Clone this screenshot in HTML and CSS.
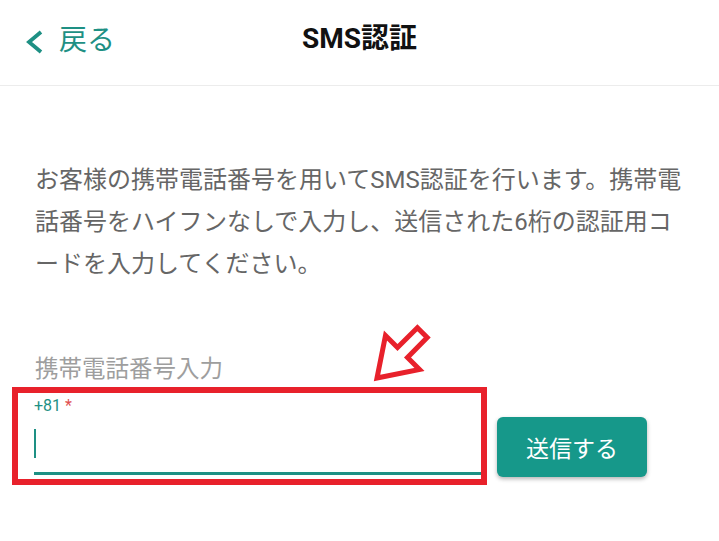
FILE: index.html
```html
<!DOCTYPE html>
<html lang="ja">
<head>
<meta charset="utf-8">
<title>SMS認証</title>
<link rel="stylesheet" href="styles.css">
</head>
<body>
<div class="page">
  <header class="header">
    <a class="back" href="#">
      <svg class="chev" width="20" height="24" viewBox="0 0 20 24"><polyline points="16,2 4,12 16,22" fill="none" stroke="#1e9084" stroke-width="3.8" stroke-linejoin="miter"/></svg>
      <span>戻る</span>
    </a>
    <h1 class="title">SMS認証</h1>
    <div></div>
  </header>
  <main class="content">
    <p class="desc">お客様の携帯電話番号を用いてSMS認証を行います。携帯電話番号をハイフンなしで入力し、送信された6桁の認証用コードを入力してください。</p>
    <div class="label">携帯電話番号入力</div>
    <div class="form-row">
      <div class="field">
        <div class="field-label">+81 <span class="req">*</span></div>
        <div class="field-input"><span class="cursor"></span></div>
        <div class="highlight"></div>
      </div>
      <button class="send">送信する</button>
    </div>
  </main>
  <svg class="arrow" width="90" height="80" viewBox="0 0 90 80"><polygon points="17,68 25.5,25.5 37.5,37.5 57.4,17.8 67.2,27.6 47.5,47.5 59.5,59.5" fill="#fff" stroke="#e8212b" stroke-width="5" stroke-linejoin="miter"/></svg>
</div>
</body>
</html>
```
FILE: styles.css
```css
* { box-sizing: border-box; }
html, body { margin: 0; padding: 0; background: #fff; }
body {
  font-family: Roboto, "Noto Sans CJK JP", sans-serif;
  color: #222;
}
.page { position: relative; width: 719px; height: 541px; overflow: hidden; }
.header {
  height: 86px;
  border-bottom: 1px solid #ececec;
  display: grid;
  grid-template-columns: 1fr auto 1fr;
  align-items: center;
  padding: 0 0 4px 0;
}
.back {
  display: flex;
  align-items: center;
  gap: 14px;
  padding-left: 25px;
  color: #1e9084;
  text-decoration: none;
  font-size: 28px;
  line-height: 1;
}
.chev { display: block; margin-top: 2px; }
.title {
  margin: 0;
  font-size: 28px;
  font-weight: 700;
  color: #111;
  line-height: 1;
  margin-bottom: 4px;
}
.content { padding: 0 35px; }
.desc {
  margin: 73px 0 0 0;
  font-size: 24px;
  line-height: 42px;
  color: #666;
}
.label {
  margin-top: 69px;
  font-size: 23.5px;
  line-height: 30px;
  color: #9e9e9e;
}
.form-row {
  display: flex;
  align-items: flex-start;
  gap: 16px;
  margin-top: 13px;
}
.field {
  position: relative;
  width: 447px;
  margin-left: -1px;
  border-bottom: 3px solid #1e9084;
}
.field-label {
  font-size: 16px;
  line-height: 18px;
  color: #1e9084;
}
.req { color: #e05050; }
.field-input {
  height: 57px;
  display: flex;
  align-items: center;
}
.cursor { display: block; width: 2px; height: 29px; background: #1e9084; }
.highlight {
  position: absolute;
  left: -22px;
  top: -10px;
  width: 475px;
  height: 98px;
  border: 6px solid #e8212b;
}
.send {
  margin-top: 20px;
  width: 150px;
  height: 60px;
  border: none;
  border-radius: 6px;
  background: #16988a;
  color: #fff;
  font-family: Roboto, "Noto Sans CJK JP", sans-serif;
  font-size: 23px;
  box-shadow: 0 2px 4px rgba(0,0,0,0.3);
  padding: 0;
}
.arrow { position: absolute; left: 360px; top: 310px; }
```
